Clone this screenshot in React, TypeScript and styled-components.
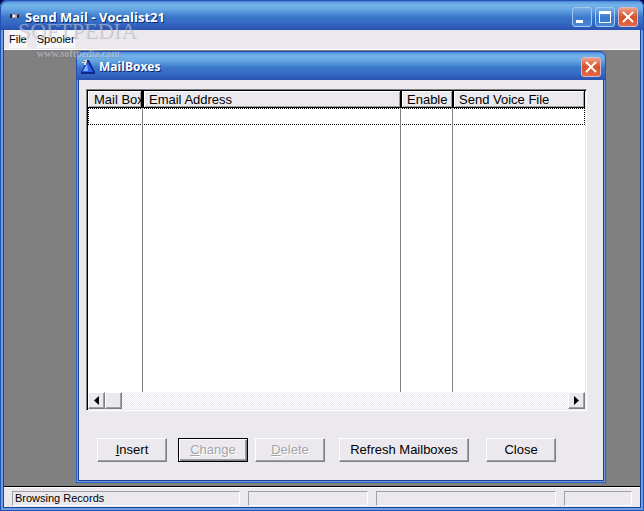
import React from 'react';
import styled, { createGlobalStyle, css } from 'styled-components';

const Global = createGlobalStyle`
  * { box-sizing: border-box; }
  html, body, #root { height: 100%; }
  body { margin: 0; background: #07074d; font-family: "Liberation Sans", Arial, sans-serif; color: #000; overflow: hidden; }
  button { font-family: inherit; }
`;

const gradient = css`
  background: linear-gradient(#2a5cc0 0, #5a9be0 2px, #74b4ea 5px, #68a8e4 9px, #4a8ad4 14px, #3a76c8 17px, #3569c4 23px, #2a52b0 100%);
  box-shadow: inset 1px 1px #2450b4, inset -1px 0 #2450b4;
`;

const MainWindow = styled.main`
  position: relative;
  display: flex;
  flex-direction: column;
  height: 100vh;
  padding: 0 4px 4px;
  border-radius: 7px 7px 0 0;
  overflow: hidden;
  background: #3a72c8;
  box-shadow: inset 1px 0 #2450b4, inset -1px 0 #2450b4, inset 0 -1px #2450b4, inset 3px 0 #6ca0e0, inset -3px 0 #6ca0e0, inset 0 -3px #6ca0e0, inset 4px 0 #1c3f9c, inset -4px 0 #1c3f9c, inset 0 -4px #1c3f9c;
`;

const TitleBar = styled.header<{ $child?: boolean }>`
  ${gradient}
  display: flex;
  align-items: center;
  height: ${p => (p.$child ? 29 : 30)}px;
  flex: none;
  margin: 0 ${p => (p.$child ? -3 : -4)}px;
  padding: ${p => (p.$child ? '2px 5px 0 4px' : '3px 6px 0 9px')};
  border-radius: 7px 7px 0 0;
  gap: ${p => (p.$child ? 3 : 4)}px;
`;

const Title = styled.h1<{ $child?: boolean }>`
  flex: 1;
  margin: 0;
  font: bold ${p => (p.$child ? 12 : 13)}px "Open Sans", "Noto Sans", sans-serif;
  color: #fff;
  text-shadow: 1px 1px #10286c;
  white-space: nowrap;
`;

const Controls = styled.div`
  display: flex;
  gap: 3px;
`;

const CaptionButton = styled.button<{ $close?: boolean }>`
  display: grid;
  width: 20px;
  height: 20px;
  padding: 0;
  place-items: center;
  border: 1px solid ${p => (p.$close ? '#d8b8c8' : '#a0c8f0')};
  border-radius: 3px;
  background: ${p => (p.$close ? 'linear-gradient(#f0a088, #d85028 50%, #e46848)' : 'linear-gradient(#78b0e8, #3a78cc 55%, #4a88d8)')};
`;

const MenuBar = styled.nav`
  display: flex;
  flex: none;
  height: 20px;
  padding-left: 5px;
  gap: 10px;
  border-bottom: 1px solid #fff;
  background: #ebe9ed;
`;

const MenuItem = styled.button`
  height: 18px;
  padding: 0;
  border: 0;
  background: #f8f7f9;
  font-size: 11px;
  line-height: 18px;
`;

const Desktop = styled.section`
  display: flex;
  flex: 1;
  min-height: 0;
  padding: 1px 34px 3px 72px;
  border-bottom: 1px solid #000;
  background: #808080;
`;

const Dialog = styled.section`
  display: flex;
  flex: 1;
  flex-direction: column;
  min-width: 0;
  padding: 0 3px 3px;
  border-radius: 7px 7px 0 0;
  background: #ebe9ed;
  box-shadow: inset 1px 0 #2c60c0, inset -1px 0 #2c60c0, inset 0 -1px #2c60c0, inset 2px 0 #6ca0e0, inset -2px 0 #6ca0e0, inset 0 -2px #6ca0e0, inset 3px 0 #1c3f9c, inset -3px 0 #1c3f9c, inset 0 -3px #1c3f9c;
`;

const Body = styled.div`
  display: flex;
  flex: 1;
  flex-direction: column;
  min-height: 0;
  padding: 9px 16px 18px 7px;
`;

const List = styled.div`
  display: flex;
  flex: 1;
  flex-direction: column;
  min-height: 0;
  padding: 1px;
  border: 1px solid #808080;
  border-right-color: #fff;
  border-bottom-color: #fff;
  background: #fff;
  box-shadow: inset 1px 1px #000, inset -1px -1px #ebe9ed;
`;

const Table = styled.table`
  display: flex;
  flex: 1;
  flex-direction: column;
  width: 100%;
  min-height: 0;
  thead { display: block; }
  tbody { display: flex; flex: 1; flex-direction: column; }
`;

const Row = styled.tr`
  display: grid;
  grid-template-columns: 55px 258px 52px 1fr;
`;

const HeadCell = styled.th`
  height: 17px;
  padding-left: 6px;
  overflow: hidden;
  border-right: 1px solid #000;
  border-bottom: 1px solid #000;
  background: #ebe9ed;
  box-shadow: inset 1px 1px #fff, inset -1px -1px #a0a0a4;
  font-size: 13px;
  font-weight: 400;
  line-height: 16px;
  text-align: left;
  white-space: nowrap;
  & + & { padding-left: 5px; border-left: 1px solid #000; }
  &:first-child { border-right-width: 2px; }
`;

const SelectedRow = styled(Row)`
  height: 17px;
  margin-bottom: -17px;
  border: 1px dotted #000;
`;

const FillRow = styled(Row)`
  flex: 1;
`;

const Cell = styled.td`
  padding: 0;
  border-right: 1px solid #808080;
  &:last-child { border-right: 0; }
`;

const bevel = css`
  border: 1px solid #fff;
  border-right-color: #808084;
  border-bottom-color: #808084;
  background: #ebe9ed;
  box-shadow: inset -1px -1px #a0a0a4;
`;

const ScrollBar = styled.div`
  display: flex;
  flex: none;
  height: 17px;
  background: repeating-conic-gradient(#ebe9ed 0 25%, #fff 0 50%) 0 0 / 2px 2px;
`;

const ScrollButton = styled.button`
  ${bevel}
  display: grid;
  width: 17px;
  padding: 0;
  place-items: center;
`;

const Track = styled.div`
  flex: 1;
`;

const Actions = styled.div`
  display: flex;
  flex: none;
  margin-top: 27px;
  padding-left: 11px;
`;

const Action = styled.button<{ $wide?: boolean; $gap?: number; $default?: boolean }>`
  ${bevel}
  width: ${p => (p.$wide ? 130 : 70)}px;
  height: 24px;
  margin-left: ${p => p.$gap ?? 0}px;
  padding: 0;
  font-size: 13px;
  line-height: 20px;
  color: #000;
  outline: ${p => (p.$default ? '1px solid #000' : 'none')};
  outline-offset: -1px;
  ${p => p.$default && css`box-shadow: inset 1px 1px #fff, inset -1px -1px #808084, inset -2px -2px #a0a0a4;`}
  &:disabled { color: #a4a4a8; text-shadow: 1px 1px #fff; }
`;

const StatusBar = styled.footer`
  display: grid;
  flex: none;
  grid-template-columns: 228fr 120fr 180fr 68fr;
  height: 20px;
  padding: 3px 8px 2px;
  gap: 8px;
  border-top: 1px solid #fff;
  background: #ebe9ed;
`;

const StatusPane = styled.div`
  min-width: 0;
  padding-left: 2px;
  border: 1px solid #a0a0a4;
  border-right-color: #fff;
  border-bottom-color: #fff;
  font-size: 11px;
  line-height: 13px;
  white-space: nowrap;
`;

const Watermark = styled.div`
  position: absolute;
  top: 17px;
  left: 18px;
  color: rgba(220, 220, 226, 0.5);
  font: 22px/28px "Liberation Serif", serif;
  text-shadow: 1px 1px rgba(90, 90, 110, 0.25);
  pointer-events: none;
`;

const WatermarkUrl = styled.small`
  display: block;
  padding-left: 19px;
  font: bold 10px/18px "Liberation Serif", serif;
`;

const Cross = () => (
  <svg width="12" height="12" viewBox="0 0 12 12" aria-hidden="true">
    <path d="M1 1L11 11M11 1L1 11" stroke="#fff" strokeWidth="2" />
  </svg>
);

const AppIcon = () => (
  <svg width="12" height="8" viewBox="0 0 12 8" shapeRendering="crispEdges" aria-hidden="true">
    <path d="M1 1H10V5H1Z" fill="#28202c" />
    <path d="M3 1H8V5H3Z" fill="#a8a0b8" />
    <path d="M4 2H6V4H4Z" fill="#fff" />
    <path d="M7 1H9V2H7Z" fill="#907868" />
  </svg>
);

const DialogIcon = () => (
  <svg width="16" height="16" viewBox="0 0 16 16" aria-hidden="true">
    <path d="M7 1H9L15 13V15H1V13Z" fill="#14248c" />
    <path d="M8 3L13 13H2L6 5Z" fill="#2c60e8" />
    <path d="M7 5L8 12H3Z" fill="#80b4fc" />
    <path d="M2 3H4V1H7V3L6 5V6H4V4H2Z" fill="#d8dcd0" />
    <path d="M4 2H5V3H4Z" fill="#605838" />
  </svg>
);

export default function App() {
  return (
    <>
      <Global />
      <MainWindow>
        <TitleBar>
          <AppIcon />
          <Title>Send Mail - Vocalist21</Title>
          <Controls>
            <CaptionButton aria-label="Minimize">
              <svg width="14" height="14"><path d="M1 10H8V13H1Z" fill="#fff" /></svg>
            </CaptionButton>
            <CaptionButton aria-label="Maximize">
              <svg width="12" height="12" shapeRendering="crispEdges"><path d="M0 0H12V12H0ZM1 3V11H11V3Z" fill="#fff" fillRule="evenodd" /></svg>
            </CaptionButton>
            <CaptionButton $close aria-label="Close window"><Cross /></CaptionButton>
          </Controls>
        </TitleBar>
        <MenuBar>
          <MenuItem>File</MenuItem>
          <MenuItem>Spooler</MenuItem>
        </MenuBar>
        <Desktop>
          <Dialog role="dialog" aria-label="MailBoxes">
            <TitleBar $child>
              <DialogIcon />
              <Title as="h2" $child>MailBoxes</Title>
              <CaptionButton $close aria-label="Close dialog"><Cross /></CaptionButton>
            </TitleBar>
            <Body>
              <List>
                <Table>
                  <thead>
                    <Row>
                      <HeadCell>Mail Box</HeadCell>
                      <HeadCell>Email Address</HeadCell>
                      <HeadCell>Enable</HeadCell>
                      <HeadCell>Send Voice File</HeadCell>
                    </Row>
                  </thead>
                  <tbody>
                    <SelectedRow><td /></SelectedRow>
                    <FillRow><Cell /><Cell /><Cell /><Cell /></FillRow>
                  </tbody>
                </Table>
                <ScrollBar>
                  <ScrollButton aria-label="Scroll left"><svg width="5" height="9"><path d="M5 0V9L0 4.500Z" /></svg></ScrollButton>
                  <ScrollButton aria-label="Scroll position" />
                  <Track />
                  <ScrollButton aria-label="Scroll right"><svg width="5" height="9"><path d="M0 0V9L5 4.500Z" /></svg></ScrollButton>
                </ScrollBar>
              </List>
              <Actions>
                <Action><u>I</u>nsert</Action>
                <Action $gap={11} $default disabled><u>C</u>hange</Action>
                <Action $gap={7} disabled><u>D</u>elete</Action>
                <Action $gap={14} $wide>Refresh Mailboxes</Action>
                <Action $gap={17}>Close</Action>
              </Actions>
            </Body>
          </Dialog>
        </Desktop>
        <StatusBar>
          <StatusPane>Browsing Records</StatusPane>
          <StatusPane />
          <StatusPane />
          <StatusPane />
        </StatusBar>
        <Watermark>
          SOFTPEDIA
          <WatermarkUrl>www.softpedia.com</WatermarkUrl>
        </Watermark>
      </MainWindow>
    </>
  );
}
